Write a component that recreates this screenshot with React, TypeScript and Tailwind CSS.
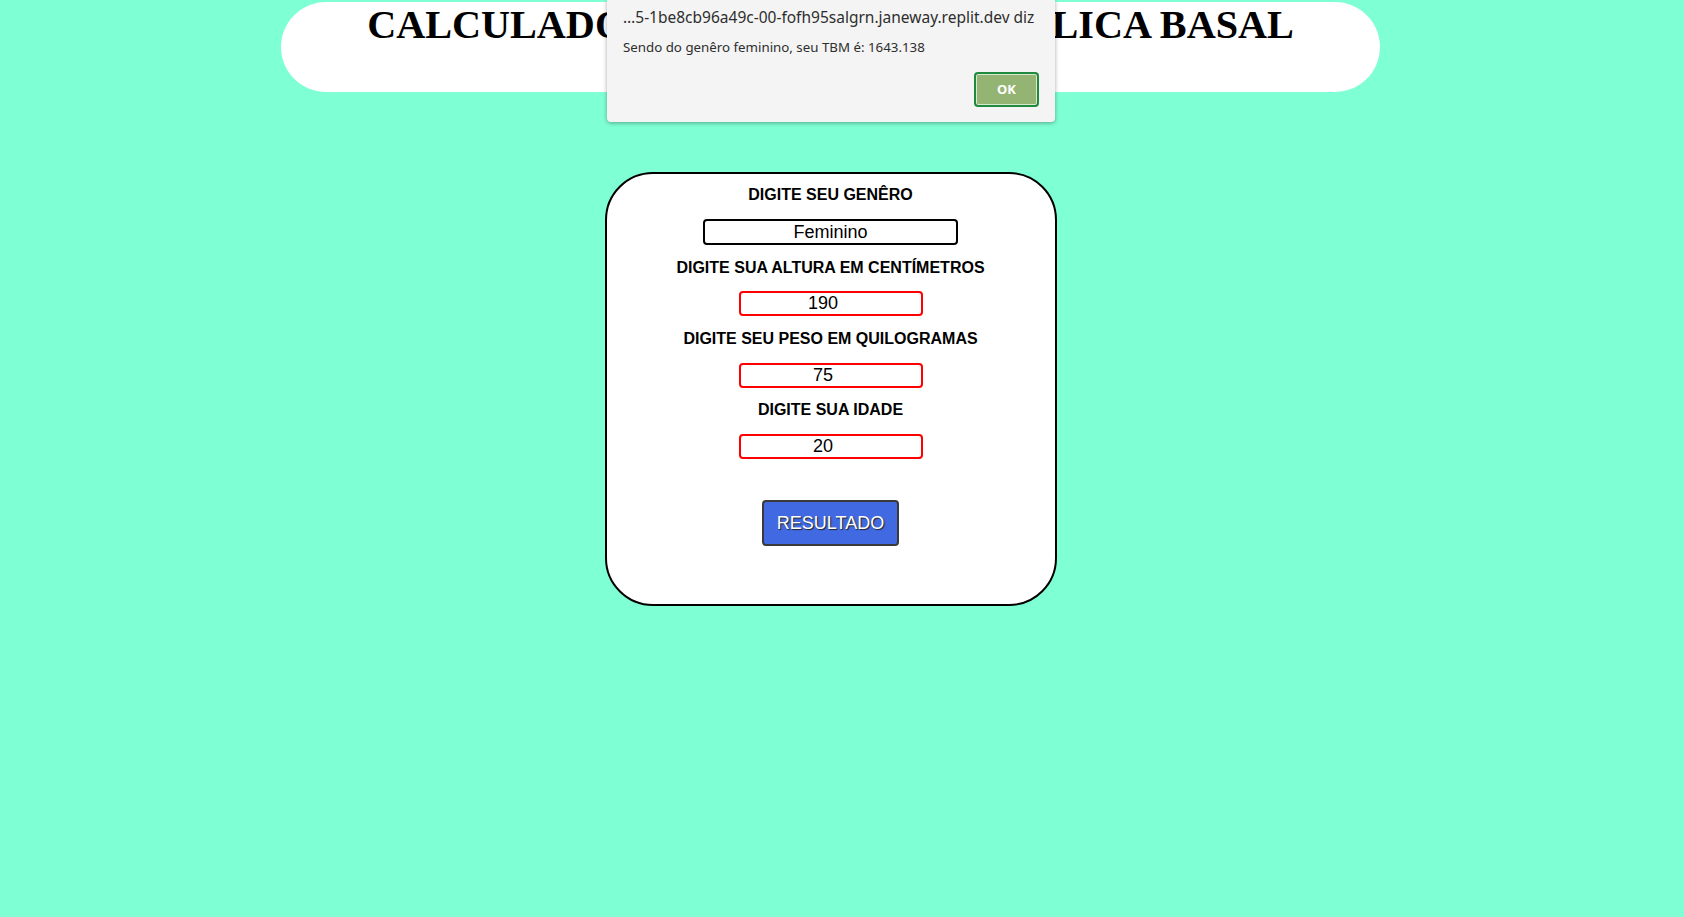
import React from "react";

const fields = [
    { label: "DIGITE SUA ALTURA EM CENTÍMETROS", value: "190", labelMt: "mt-[14px]", inputMt: "mt-[14px]" },
    { label: "DIGITE SEU PESO EM QUILOGRAMAS", value: "75", labelMt: "mt-[14px]", inputMt: "mt-[15px]" },
    { label: "DIGITE SUA IDADE", value: "20", labelMt: "mt-[13px]", inputMt: "mt-[15px]" },
];

const AlertBox: React.FC = () => {
    return (
        <div className="absolute left-[607px] top-0 w-[448px] h-[122px] bg-[#f4f4f4] rounded-b-[4px] shadow-[0_1px_4px_rgba(0,0,0,0.35)] font-['Noto_Sans',sans-serif] text-[#2e2e2e] flex flex-col">
            <div className="pl-[16px] pt-[5px] text-[15.5px] leading-[24px] whitespace-nowrap">
                …5-1be8cb96a49c-00-fofh95salgrn.janeway.replit.dev diz
            </div>
            <div className="pl-[16px] mt-[8px] text-[13.3px] leading-[20px] whitespace-nowrap">
                Sendo do genêro feminino, seu TBM é: 1643.138
            </div>
            <div className="flex justify-end pr-[16px] mt-[15px]">
                <button className="w-[65px] h-[35px] rounded-[4px] border-2 border-[#1f8a3d] bg-[#93b472] shadow-[inset_0_0_0_1px_#dbe8d0] text-white font-bold text-[13px] font-['Noto_Sans',sans-serif]">
                    OK
                </button>
            </div>
        </div>
    );
};

export default function App() {
    return (
        <div className="relative min-h-screen bg-[#7fffd4] font-['Liberation_Sans',Arial,sans-serif]">
            <div className="w-[1661px] flex flex-col items-center">
                <header className="mt-[2px] w-[1099px] h-[90px] rounded-full bg-white">
                    <h1 className="text-center font-['Liberation_Serif',serif] font-bold text-[40.2px] leading-[46px] text-black">
                        CALCULADORA DE TAXA METABÓLICA BASAL
                    </h1>
                </header>

                <div className="mt-[80px] w-[452px] border-2 border-black rounded-[48px] bg-white flex flex-col items-center pt-[12px] pb-[58px]">
                    <label className="text-[16px] leading-[18px] font-bold text-black">DIGITE SEU GENÊRO</label>
                    <input
                        type="text"
                        defaultValue="Feminino"
                        className="mt-[15px] w-[255px] h-[26px] border-2 border-black rounded-[4px] text-center text-[18px] text-black outline-none"
                    />
                    {fields.map((f) => (
                        <React.Fragment key={f.label}>
                            <label className={`${f.labelMt} text-[16px] leading-[18px] font-bold text-black`}>{f.label}</label>
                            <input
                                type="number"
                                defaultValue={f.value}
                                className={`${f.inputMt} w-[184px] h-[25px] border-2 border-[#ff0000] rounded-[4px] text-center text-[18px] text-black outline-none`}
                            />
                        </React.Fragment>
                    ))}
                    <button className="mt-[41px] w-[137px] h-[46px] bg-[#4169e1] border-2 border-[#3a3a3a] rounded-[4px] text-white text-[18px] [text-shadow:1px_1px_1px_#222]">
                        RESULTADO
                    </button>
                </div>
            </div>
            <AlertBox />
        </div>
    );
}
